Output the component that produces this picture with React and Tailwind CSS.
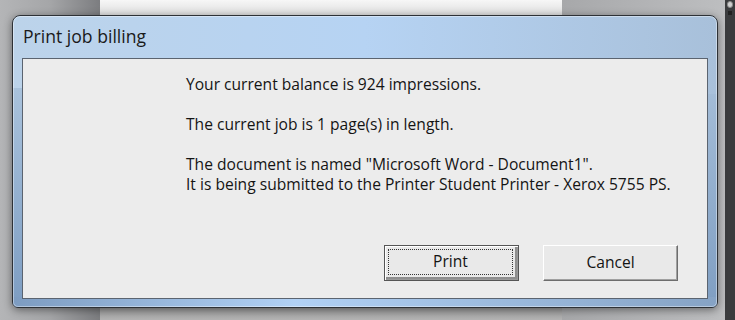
export default function App() {
  return (
    <div className="relative h-[320px] w-[735px] overflow-hidden bg-[#a9a9a9]" style={{ fontFamily: '"Open Sans", "Noto Sans", sans-serif' }}>
      {/* desktop behind the dialog */}
      <div className="flex h-full w-full">
        <div className="h-full w-[100px] bg-gradient-to-r from-[#b4b5b7] via-[#a5a6a8] to-[#7c7d80]" />
        <div className="flex h-full w-[462px] flex-col">
          <div className="h-[16px] bg-gradient-to-b from-[#f7f7f7] to-[#dcdcdc]" />
          <div className="flex-1 bg-[#d6d6d6]" />
          <div className="h-[14px] bg-gradient-to-b from-[#9a9a9a] to-[#b4b4b4]" />
        </div>
        <div className="h-full flex-1 bg-gradient-to-r from-[#a7a8aa] to-[#bdbec0]" />
        <div className="flex h-full w-[10px] flex-col items-center bg-[#3b3c3e] pt-[1px]">
          <div className="h-[7px] w-[6px] rounded-sm border border-[#8a8a8a] bg-[#cfcfcf]" />
          <div className="mt-[3px] h-[4px] w-[4px] bg-[#222]" />
        </div>
      </div>

      {/* dialog window */}
      <div className="absolute left-[12px] top-[15px] flex h-[293px] w-[706px] flex-col overflow-hidden rounded-t-[8px] rounded-b-[6px] border border-[#2d3136] bg-gradient-to-r from-[#bcd3ea] via-[#b6d3f3] to-[#a8c0da] shadow-[0_2px_8px_rgba(0,0,0,0.45)]">
        {/* glass shading on the lower frame */}
        <div className="pointer-events-none absolute left-0 top-[72px] bottom-0 w-[12px] bg-gradient-to-b from-[#a9c2dc] to-[#7d9dc2]" />
        <div className="pointer-events-none absolute right-0 top-[78px] bottom-0 w-[12px] bg-gradient-to-b from-[#a3bcd7] to-[#7f9ec2]" />
        <div className="pointer-events-none absolute bottom-0 left-0 right-0 h-[10px] bg-gradient-to-r from-[#7d9cc1] via-[#b1d1f5] via-40% to-[#86a3c5]" />
        <div className="pointer-events-none absolute inset-0 rounded-t-[7px] rounded-b-[5px] border border-white/40" />
        <div className="relative flex h-[42px] items-center px-[10px] pb-[2px]">
          <span className="text-[17.6px] text-[#1a1a1a]">Print job billing</span>
        </div>
        <div className="relative mx-[9px] mb-[8px] flex flex-1 flex-col border border-[#5b6470] bg-[#ececec] text-[15.6px] text-[#141414]">
          <div className="flex flex-col pl-[163px] pt-[15px] leading-[20px]">
            <p>Your current balance is 924 impressions.</p>
            <p className="mt-[20px]">The current job is 1 page(s) in length.</p>
            <p className="mt-[20px]">The document is named "Microsoft Word - Document1".</p>
            <p>It is being submitted to the Printer Student Printer - Xerox 5755 PS.</p>
          </div>
          <div className="mt-auto flex gap-[24px] pb-[17px] pl-[361px]">
            <button
              type="button"
              className="h-[36px] w-[135px] border border-[#555] bg-[#e9e9e9] p-[1px] shadow-[inset_1px_1px_0_#fff,inset_-1px_-1px_0_#9a9a9a]"
            >
              <div className="flex h-full w-full items-center justify-center border-b-2 border-r-2 border-b-[#8e8e8e] border-r-[#8e8e8e] p-[2px]">
                <div className="flex h-full w-full items-center justify-center border border-dotted border-[#333]">
                  Print
                </div>
              </div>
            </button>
            <button
              type="button"
              className="flex h-[36px] w-[135px] items-center justify-center border border-t-white border-l-white border-r-[#6d6d6d] border-b-[#6d6d6d] bg-[#e9e9e9] shadow-[inset_-1px_-1px_0_#a0a0a0]"
            >
              Cancel
            </button>
          </div>
        </div>
      </div>
    </div>
  );
}
